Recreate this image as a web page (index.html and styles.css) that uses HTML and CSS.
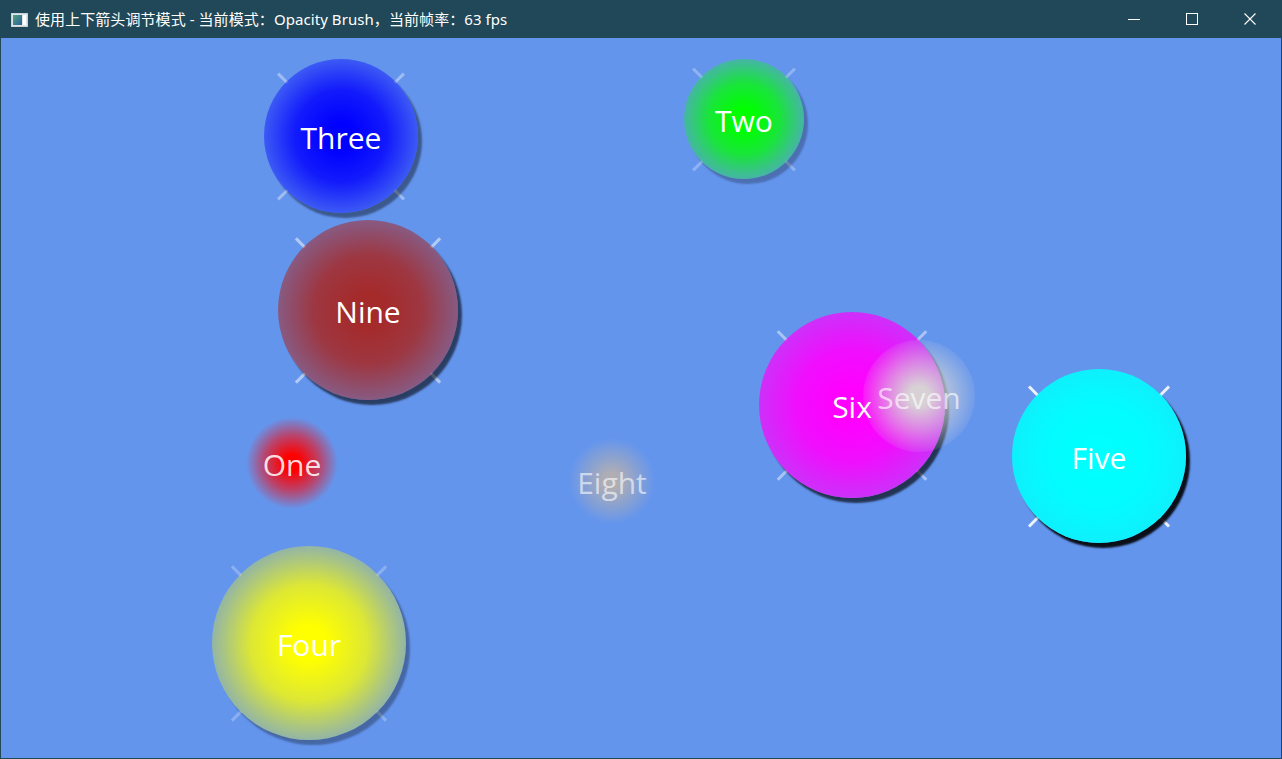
FILE: index.html
```html
<!DOCTYPE html>
<html lang="zh-CN">
<head>
<meta charset="utf-8">
<title>Opacity Brush</title>
<link rel="stylesheet" href="styles.css">
</head>
<body>
<div class="window">
  <header class="titlebar">
    <svg class="app-icon" width="17" height="14" viewBox="0 0 17 14">
      <defs>
        <linearGradient id="ig" x1="0" y1="0" x2="1" y2="1">
          <stop offset="0" stop-color="#4fa37a"/>
          <stop offset="1" stop-color="#2c5f9e"/>
        </linearGradient>
      </defs>
      <rect x="0.5" y="0.5" width="16" height="13" fill="#dfe6ea" stroke="#c9d2d8"/>
      <rect x="2" y="2" width="9" height="10" fill="url(#ig)"/>
      <rect x="12" y="2" width="3" height="10" fill="#ffffff"/>
    </svg>
    <span class="title">使用上下箭头调节模式 - 当前模式：Opacity Brush，当前帧率：63 fps</span>
    <div class="controls">
      <span class="ctl">
        <svg width="12" height="12" viewBox="0 0 12 12"><path d="M0 6.5H12" stroke="#fff" stroke-width="1"/></svg>
      </span>
      <span class="ctl">
        <svg width="12" height="12" viewBox="0 0 12 12"><rect x="0.5" y="0.5" width="11" height="11" fill="none" stroke="#fff" stroke-width="1"/></svg>
      </span>
      <span class="ctl">
        <svg width="12" height="12" viewBox="0 0 12 12"><path d="M0.5 0.5L11.5 11.5M11.5 0.5L0.5 11.5" stroke="#fff" stroke-width="1.1"/></svg>
      </span>
    </div>
  </header>
  <main class="canvas">
    <div class="ball three">
      <i class="tick t1"></i><i class="tick t2"></i><i class="tick t3"></i><i class="tick t4"></i>
      <div class="disc"></div><span class="label">Three</span>
    </div>
    <div class="ball two">
      <i class="tick t1"></i><i class="tick t2"></i><i class="tick t3"></i><i class="tick t4"></i>
      <div class="disc"></div><span class="label">Two</span>
    </div>
    <div class="ball nine">
      <i class="tick t1"></i><i class="tick t2"></i><i class="tick t3"></i><i class="tick t4"></i>
      <div class="disc"></div><span class="label">Nine</span>
    </div>
    <div class="ball six">
      <i class="tick t1"></i><i class="tick t2"></i><i class="tick t3"></i><i class="tick t4"></i>
      <div class="disc"></div><span class="label">Six</span>
    </div>
    <div class="ball seven">
      <div class="disc"></div><span class="label">Seven</span>
    </div>
    <div class="ball five">
      <i class="tick t1"></i><i class="tick t2"></i><i class="tick t3"></i><i class="tick t4"></i>
      <div class="disc"></div><span class="label">Five</span>
    </div>
    <div class="ball one">
      <div class="disc"></div><span class="label">One</span>
    </div>
    <div class="ball eight">
      <div class="disc"></div><span class="label">Eight</span>
    </div>
    <div class="ball four">
      <i class="tick t1"></i><i class="tick t2"></i><i class="tick t3"></i><i class="tick t4"></i>
      <div class="disc"></div><span class="label">Four</span>
    </div>
  </main>
</div>
</body>
</html>
```
FILE: styles.css
```css
html, body {
  margin: 0;
  padding: 0;
  width: 1282px;
  height: 759px;
  overflow: hidden;
}

.window {
  width: 1282px;
  height: 759px;
  background: #214858;
  display: flex;
  flex-direction: column;
}

.titlebar {
  height: 38px;
  display: flex;
  align-items: center;
  padding: 0 3px 0 11px;
  color: #ffffff;
  font-family: "Noto Sans", "Noto Sans CJK SC", sans-serif;
  font-size: 15px;
  box-sizing: border-box;
}

.app-icon {
  flex: none;
  margin-top: 1px;
}

.title {
  margin-left: 7px;
  white-space: nowrap;
  flex: 1;
  line-height: 20px;
  letter-spacing: 0.07px;
}

.controls {
  display: flex;
  height: 38px;
}

.ctl {
  width: 58px;
  height: 38px;
  display: flex;
  align-items: center;
  justify-content: center;
}

.ctl svg {
  display: block;
}

.canvas {
  flex: 1;
  margin: 0 1px 1px 1px;
  background: #6495ed;
  position: relative;
  overflow: hidden;
}

.ball {
  position: absolute;
  width: calc(var(--r) * 2);
  height: calc(var(--r) * 2);
  display: flex;
  align-items: center;
  justify-content: center;
}

.disc {
  position: absolute;
  inset: 0;
  border-radius: 50%;
  background: radial-gradient(circle closest-side, var(--c) 0%, var(--c) 18%, var(--m) 60%, var(--e) 100%);
  box-shadow: 4px 5px 2px rgba(0, 0, 0, var(--s));
}

.label {
  position: relative;
  font-family: "Open Sans", "Noto Sans", sans-serif;
  font-size: 30px;
  line-height: 40px;
  color: rgba(255, 255, 255, var(--ta, 1));
  margin-top: 4px;
  white-space: nowrap;
}

.tick {
  position: absolute;
  left: 50%;
  top: 50%;
  width: 13px;
  height: 3px;
  margin-top: -1.5px;
  transform-origin: 0 50%;
  background: rgba(255, 255, 255, var(--t));
}

.t1 { transform: rotate(45deg) translateX(calc(var(--r) - 1px)); }
.t2 { transform: rotate(135deg) translateX(calc(var(--r) - 1px)); }
.t3 { transform: rotate(225deg) translateX(calc(var(--r) - 1px)); }
.t4 { transform: rotate(315deg) translateX(calc(var(--r) - 1px)); }

.three {
  --r: 77px;
  left: 263px; top: 21px;
  --c: #0000ff; --m: rgba(0, 0, 255, 0.82); --e: rgba(0, 0, 255, 0.4);
  --s: 0.4; --t: 0.38;
}

.two {
  --r: 60px;
  left: 683px; top: 21px;
  --c: #00ff00; --m: rgba(0, 255, 0, 0.75); --e: rgba(0, 255, 0, 0.3);
  --s: 0.25; --t: 0.28;
}

.nine {
  --r: 90px;
  left: 277px; top: 182px;
  --c: #a52a2a; --m: rgba(165, 42, 42, 0.88); --e: rgba(165, 42, 42, 0.55);
  --s: 0.58; --t: 0.5;
}

.six {
  --r: 93px;
  left: 758px; top: 274px;
  --c: #ff00ff; --m: rgba(255, 0, 255, 0.9); --e: rgba(255, 0, 255, 0.68);
  --s: 0.65; --t: 0.45;
}

.seven {
  --r: 56px;
  left: 862px; top: 302px;
  --c: rgba(215, 215, 212, 0.97); --m: rgba(215, 215, 212, 0.55); --e: rgba(215, 215, 215, 0.1);
  --s: 0; --ta: 0.65;
}

.five {
  --r: 87px;
  left: 1011px; top: 331px;
  --c: #00ffff; --m: rgba(0, 255, 255, 0.97); --e: rgba(0, 255, 255, 0.86);
  --s: 0.9; --t: 0.88;
}

.one {
  --r: 46px;
  left: 245px; top: 379px;
  --c: #ff0000; --m: rgba(255, 0, 0, 0.55); --e: rgba(255, 0, 0, 0);
  --s: 0; --ta: 0.85;
}

.eight {
  --r: 43px;
  left: 568px; top: 400px;
  --c: rgba(195, 180, 165, 0.8); --m: rgba(195, 180, 165, 0.38); --e: rgba(195, 180, 165, 0);
  --s: 0; --ta: 0.6;
}

.four {
  --r: 97px;
  left: 211px; top: 508px;
  --c: #ffff00; --m: rgba(255, 255, 0, 0.78); --e: rgba(255, 255, 0, 0.3);
  --s: 0.3; --t: 0.25;
}
```
